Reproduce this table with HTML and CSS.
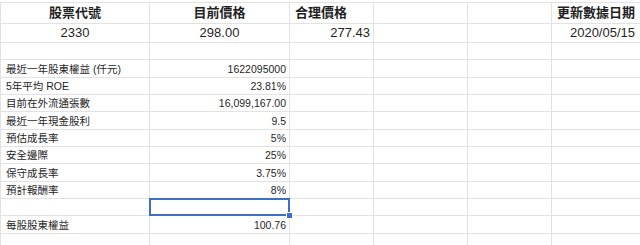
FILE: index.html
```html
<!DOCTYPE html>
<html lang="zh-Hant">
<head>
<meta charset="utf-8">
<title>股票估值</title>
<link rel="stylesheet" href="styles.css">
</head>
<body>
<div class="sheet">
  <div class="c head center">股票代號</div>
  <div class="c head center">目前價格</div>
  <div class="c head">合理價格</div>
  <div class="c head"></div>
  <div class="c head"></div>
  <div class="c head right">更新數據日期</div>

  <div class="c big center">2330</div>
  <div class="c big center">298.00</div>
  <div class="c big right">277.43</div>
  <div class="c big"></div>
  <div class="c big"></div>
  <div class="c big right last">2020/05/15</div>

  <div class="c"></div><div class="c"></div><div class="c"></div><div class="c"></div><div class="c"></div><div class="c"></div>

  <div class="c">最近一年股東權益 (仟元)</div>
  <div class="c right">1622095000</div>
  <div class="c"></div><div class="c"></div><div class="c"></div><div class="c"></div>

  <div class="c">5年平均 ROE</div>
  <div class="c right">23.81%</div>
  <div class="c"></div><div class="c"></div><div class="c"></div><div class="c"></div>

  <div class="c">目前在外流通張數</div>
  <div class="c right">16,099,167.00</div>
  <div class="c"></div><div class="c"></div><div class="c"></div><div class="c"></div>

  <div class="c">最近一年現金股利</div>
  <div class="c right">9.5</div>
  <div class="c"></div><div class="c"></div><div class="c"></div><div class="c"></div>

  <div class="c">預估成長率</div>
  <div class="c right">5%</div>
  <div class="c"></div><div class="c"></div><div class="c"></div><div class="c"></div>

  <div class="c">安全邊際</div>
  <div class="c right">25%</div>
  <div class="c"></div><div class="c"></div><div class="c"></div><div class="c"></div>

  <div class="c">保守成長率</div>
  <div class="c right">3.75%</div>
  <div class="c"></div><div class="c"></div><div class="c"></div><div class="c"></div>

  <div class="c">預計報酬率</div>
  <div class="c right">8%</div>
  <div class="c"></div><div class="c"></div><div class="c"></div><div class="c"></div>

  <div class="c"></div>
  <div class="c selected"><span class="handle"></span></div>
  <div class="c"></div><div class="c"></div><div class="c"></div><div class="c"></div>

  <div class="c">每股股東權益</div>
  <div class="c right">100.76</div>
  <div class="c"></div><div class="c"></div><div class="c"></div><div class="c"></div>

  <div class="c"></div><div class="c"></div><div class="c"></div><div class="c"></div><div class="c"></div><div class="c"></div>
</div>
</body>
</html>
```

FILE: styles.css
```css
html, body {
  margin: 0;
  padding: 0;
  background: #ffffff;
  overflow: hidden;
}

.sheet {
  margin-top: 2px;
  width: 640px;
  box-sizing: border-box;
  padding: 1px 0 0 1px;
  background: #e2e2e2;
  display: grid;
  grid-template-columns: 148px 139px 83px 93px 83px 1fr;
  grid-template-rows: 20px 18px 16px 17px 16px 16px 17px 16px 16px 17px 16px 16px 17px 16px;
  gap: 1px;
  font-family: "Liberation Sans", "Noto Sans CJK TC", sans-serif;
  color: #1f1f1f;
}

.c {
  background: #ffffff;
  display: flex;
  align-items: flex-end;
  padding: 0 3px 1px 5px;
  font-size: 10.5px;
  line-height: 13px;
  white-space: nowrap;
  overflow: visible;
  position: relative;
}

.head {
  font-weight: bold;
  font-size: 13px;
  line-height: 16px;
  align-items: center;
  padding-bottom: 0;
}

.big {
  font-size: 13px;
  line-height: 15px;
  padding-bottom: 2px;
}

.center {
  justify-content: center;
  padding-left: 3px;
}

.right {
  justify-content: flex-end;
}

.head.right,
.last {
  padding-right: 6px;
}

.selected::after {
  content: "";
  position: absolute;
  left: -1px;
  top: -1px;
  right: -1px;
  bottom: -1px;
  border: 2px solid #3d6fc4;
}

.handle {
  position: absolute;
  right: -4px;
  bottom: -4px;
  width: 5px;
  height: 5px;
  background: #3d6fc4;
  border: 1px solid #ffffff;
  z-index: 2;
}
```
